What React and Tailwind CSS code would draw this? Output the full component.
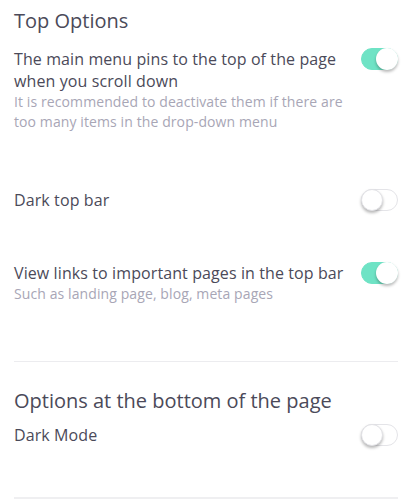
import React, { useState } from 'react';

const Toggle = ({ on, onChange }) => (
  <button
    onClick={() => onChange(!on)}
    className={`relative block shrink-0 w-[37px] h-[22px] rounded-full border transition-colors ${
      on ? 'bg-[#6fe3c5] border-[#6fe3c5]' : 'bg-white border-[#e4e4e8]'
    }`}
  >
    <span
      className={`absolute top-[-1px] w-[22px] h-[22px] rounded-full bg-white shadow-[0_2px_3px_rgba(0,0,0,0.28)] ${
        on ? 'right-[-1px]' : 'left-[-1px] border border-[#e2e2e6]'
      }`}
    />
  </button>
);

const Row = ({ title, hint, on, onChange, className = '' }) => (
  <div className={`flex items-start justify-between gap-3 ${className}`}>
    <div className="flex-1">
      <p className="text-[16px] leading-[22px] tracking-[0.1px] text-[#4b4a59]">{title}</p>
      {hint && <p className="text-[14px] leading-[20px] tracking-[0.1px] text-[#a8a6b6]">{hint}</p>}
    </div>
    <Toggle on={on} onChange={onChange} />
  </div>
);

export default function App() {
  const [opts, setOpts] = useState({ pin: true, darkBar: false, links: true, darkMode: false });
  const set = (k) => (v) => setOpts((o) => ({ ...o, [k]: v }));

  return (
    <div className="w-[420px] h-[501px] overflow-hidden bg-white pl-[14px] pr-[22px] font-['Open_Sans','Noto_Sans',sans-serif]">
      <h2 className="pt-[7px] text-[20px] leading-[28px] text-[#4b4a59]">Top Options</h2>
      <Row
        className="mt-[13px]"
        title="The main menu pins to the top of the page when you scroll down"
        hint="It is recommended to deactivate them if there are too many items in the drop-down menu"
        on={opts.pin}
        onChange={set('pin')}
      />
      <Row className="mt-[57px]" title="Dark top bar" on={opts.darkBar} onChange={set('darkBar')} />
      <Row
        className="mt-[51px]"
        title="View links to important pages in the top bar"
        hint="Such as landing page, blog, meta pages"
        on={opts.links}
        onChange={set('links')}
      />
      <div className="mt-[57px] h-px bg-[#ececef]" />

      <h2 className="mt-[25px] text-[20px] leading-[28px] text-[#4b4a59]">Options at the bottom of the page</h2>
      <Row className="mt-[9px]" title="Dark Mode" on={opts.darkMode} onChange={set('darkMode')} />
      <div className="mt-[51px] h-[2px] bg-[#efeff1]" />
    </div>
  );
}
